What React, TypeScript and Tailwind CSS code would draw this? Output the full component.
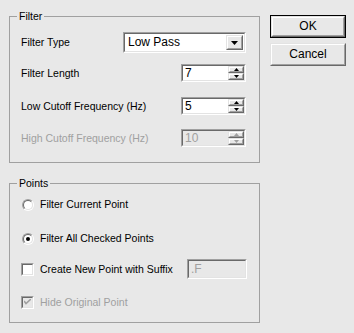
import React from "react";

function Sunken({ className = "", innerClass = "bg-white", children }: { className?: string; innerClass?: string; children?: React.ReactNode }) {
  return (
    <div className={"border border-t-[#a0a0a0] border-l-[#a0a0a0] border-b-white border-r-white flex " + className}>
      <div className={"flex-1 flex border border-t-[#696969] border-l-[#696969] border-b-[#e3e3e3] border-r-[#e3e3e3] " + innerClass}>
        {children}
      </div>
    </div>
  );
}

function Raised({ className = "", children }: { className?: string; children?: React.ReactNode }) {
  return (
    <div className={"border border-t-[#e3e3e3] border-l-[#e3e3e3] border-b-[#696969] border-r-[#696969] flex bg-[#e8e8e8] " + className}>
      <div className="flex-1 flex items-center justify-center border border-t-white border-l-white border-b-[#a0a0a0] border-r-[#a0a0a0]">
        {children}
      </div>
    </div>
  );
}

function Arrow({ up, color, w = 5, h = 3 }: { up?: boolean; color: string; w?: number; h?: number }) {
  return (
    <svg width={w} height={h} viewBox={`0 0 ${w} ${h}`} className="block">
      <polygon points={up ? `${w / 2},0 ${w},${h} 0,${h}` : `0,0 ${w},0 ${w / 2},${h}`} fill={color} />
    </svg>
  );
}

function Spin({ value, disabled }: { value: string; disabled?: boolean }) {
  const c = disabled ? "#a0a0a0" : "#000";
  return (
    <Sunken className="w-[65px] h-[18px]" innerClass={disabled ? "bg-[#e8e8e8]" : "bg-white"}>
      <div className={"flex-1 pl-[2px] text-[12px] leading-[14px] " + (disabled ? "text-[#a0a0a0]" : "text-black")}>{value}</div>
      <div className="w-[16px] flex flex-col">
        <Raised className="h-[8px]">
          <Arrow up color={c} />
        </Raised>
        <Raised className="h-[8px]">
          <Arrow color={c} />
        </Raised>
      </div>
    </Sunken>
  );
}

function Radio({ checked, label }: { checked?: boolean; label: string }) {
  return (
    <div className="flex items-center h-[13px] gap-[6px] pl-[1px]">
      <div className="w-[12px] h-[12px] rounded-full border border-t-[#a0a0a0] border-l-[#a0a0a0] border-b-white border-r-white flex">
        <div className="flex-1 rounded-full border border-t-[#696969] border-l-[#696969] border-b-[#e3e3e3] border-r-[#e3e3e3] bg-white flex items-center justify-center">
          {checked && <div className="w-[4px] h-[4px] rounded-full bg-black" />}
        </div>
      </div>
      <span>{label}</span>
    </div>
  );
}

function Check({ checked, disabled, label }: { checked?: boolean; disabled?: boolean; label: string }) {
  return (
    <div className="flex items-center gap-[6px]">
      <Sunken className="w-[13px] h-[13px]" innerClass={disabled ? "bg-[#e8e8e8] items-center justify-center" : "bg-white items-center justify-center"}>
        {checked && (
          <svg width="7" height="7" viewBox="0 0 7 7" className="block">
            <polyline points="0,2 2,4.5 7,0" fill="none" stroke={disabled ? "#a0a0a0" : "#000"} strokeWidth="1.6" />
          </svg>
        )}
      </Sunken>
      <span className={disabled ? "text-[#a0a0a0]" : "text-black"}>{label}</span>
    </div>
  );
}

export default function App() {
  return (
    <div className="w-[354px] h-[333px] bg-[#e8e8e8] flex pl-[9px] pt-[10px] text-[10.5px] leading-[13px] text-black font-['Liberation_Sans',Arial,sans-serif]">
      <div className="flex flex-col w-[251px]">
        <fieldset className="h-[153px] border border-[#a0a0a0] flex flex-col">
          <legend className="ml-[7px] px-[2px]">Filter</legend>
          <div className="flex items-center justify-between h-[21px] mt-[9px] pl-[11px] pr-[13px]">
            <span>Filter Type</span>
            <Sunken className="w-[123px] h-[21px]">
              <div className="flex-1 pl-[3px] flex items-center text-[12px]">Low Pass</div>
              <Raised className="w-[17px] my-[1px] mr-[1px]">
                <Arrow color="#000" w={7} h={4} />
              </Raised>
            </Sunken>
          </div>
          <div className="flex items-center justify-between h-[18px] mt-[11px] pl-[11px] pr-[13px]">
            <span>Filter Length</span>
            <Spin value="7" />
          </div>
          <div className="flex items-center justify-between h-[18px] mt-[15px] pl-[11px] pr-[13px]">
            <span>Low Cutoff Frequency (Hz)</span>
            <Spin value="5" />
          </div>
          <div className="flex items-center justify-between h-[18px] mt-[14px] pl-[11px] pr-[13px]">
            <span className="text-[#a0a0a0]">High Cutoff Frequency (Hz)</span>
            <Spin value="10" disabled />
          </div>
        </fieldset>
        <fieldset className="h-[146px] mt-[14px] border border-[#a0a0a0] flex flex-col pl-[11px] pr-[12px]">
          <legend className="ml-[-4px] px-[2px]">Points</legend>
          <div className="mt-[8px]">
            <Radio label="Filter Current Point" />
          </div>
          <div className="mt-[21px]">
            <Radio checked label="Filter All Checked Points" />
          </div>
          <div className="mt-[14px] h-[20px] flex items-center justify-between">
            <Check label="Create New Point with Suffix" />
            <Sunken className="w-[60px] h-[20px]" innerClass="bg-[#e8e8e8]">
              <div className="pl-[2px] flex items-center text-[12px] text-[#a0a0a0]">.F</div>
            </Sunken>
          </div>
          <div className="mt-[17px]">
            <Check checked disabled label="Hide Original Point" />
          </div>
        </fieldset>
      </div>
      <div className="flex flex-col ml-[10px] mt-[5px] gap-[5px]">
        <div className="w-[76px] h-[23px] border border-black flex">
          <Raised className="flex-1">
            <span className="text-[12px]">OK</span>
          </Raised>
        </div>
        <Raised className="w-[76px] h-[23px]">
          <span className="text-[12px]">Cancel</span>
        </Raised>
      </div>
    </div>
  );
}
